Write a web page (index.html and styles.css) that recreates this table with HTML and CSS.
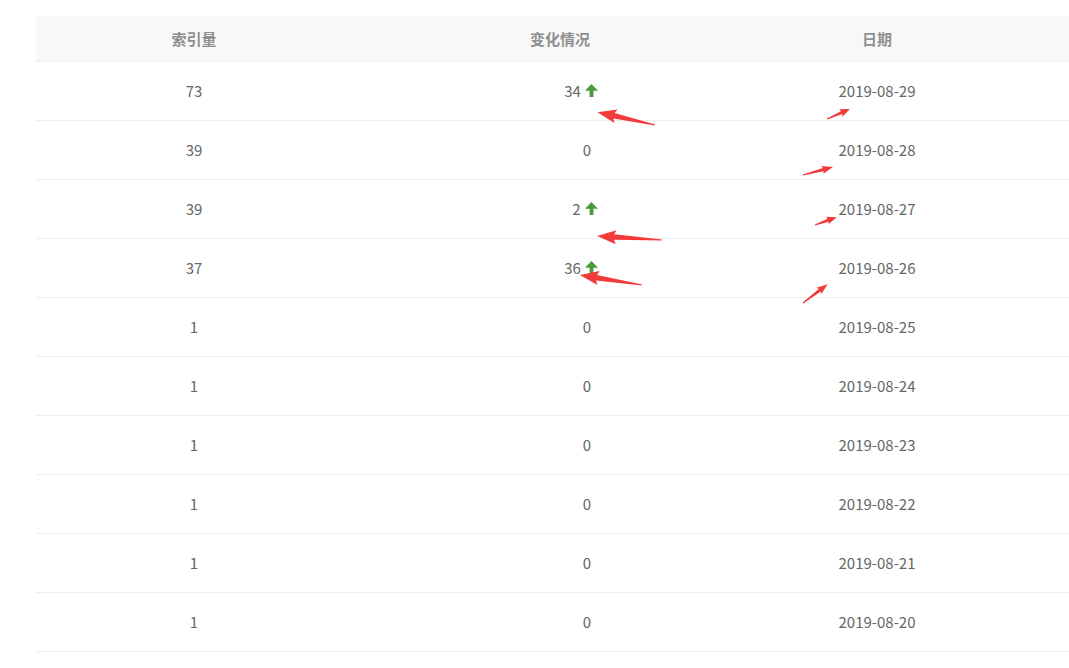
FILE: index.html
```html
<!DOCTYPE html>
<html lang="zh-CN">
<head>
<meta charset="utf-8">
<title>索引量</title>
<link rel="stylesheet" href="styles.css">
</head>
<body>
<div class="page">
  <div class="table">
    <div class="row head">
      <div class="cell">索引量</div>
      <div class="cell">变化情况</div>
      <div class="cell">日期</div>
      <div class="cell"></div>
    </div>
    <div class="row"><div class="cell">73</div><div class="cell chg rise">34<svg class="up" viewBox="0 0 13 13"><path d="M6.5 0 L13 6.8 H8.4 V13 H4.6 V6.8 H0 Z"/></svg></div><div class="cell">2019-08-29</div><div class="cell"></div></div>
    <div class="row"><div class="cell">39</div><div class="cell chg">0</div><div class="cell">2019-08-28</div><div class="cell"></div></div>
    <div class="row"><div class="cell">39</div><div class="cell chg rise one">2<svg class="up" viewBox="0 0 13 13"><path d="M6.5 0 L13 6.8 H8.4 V13 H4.6 V6.8 H0 Z"/></svg></div><div class="cell">2019-08-27</div><div class="cell"></div></div>
    <div class="row"><div class="cell">37</div><div class="cell chg rise">36<svg class="up" viewBox="0 0 13 13"><path d="M6.5 0 L13 6.8 H8.4 V13 H4.6 V6.8 H0 Z"/></svg></div><div class="cell">2019-08-26</div><div class="cell"></div></div>
    <div class="row"><div class="cell">1</div><div class="cell chg">0</div><div class="cell">2019-08-25</div><div class="cell"></div></div>
    <div class="row"><div class="cell">1</div><div class="cell chg">0</div><div class="cell">2019-08-24</div><div class="cell"></div></div>
    <div class="row"><div class="cell">1</div><div class="cell chg">0</div><div class="cell">2019-08-23</div><div class="cell"></div></div>
    <div class="row"><div class="cell">1</div><div class="cell chg">0</div><div class="cell">2019-08-22</div><div class="cell"></div></div>
    <div class="row"><div class="cell">1</div><div class="cell chg">0</div><div class="cell">2019-08-21</div><div class="cell"></div></div>
    <div class="row"><div class="cell">1</div><div class="cell chg">0</div><div class="cell">2019-08-20</div><div class="cell"></div></div>
  </div>
  <svg class="marks" width="1069" height="668" viewBox="0 0 1069 668">
    <g fill="#f23a3a">
      <polygon transform="translate(655,125) rotate(192.6)" points="0,-0.6 42,-2.8 40,-7 59,0 40,7 42,2.8 0,0.6"/>
      <polygon transform="translate(662,240) rotate(183.5)" points="0,-0.6 48,-2.8 46,-7 65,0 46,7 48,2.8 0,0.6"/>
      <polygon transform="translate(642,285) rotate(189.2)" points="0,-0.6 46,-2.8 44,-7 63,0 44,7 46,2.8 0,0.6"/>
      <polygon transform="translate(827,119) rotate(-23.5)" points="0,-0.5 16,-1.6 15,-4 25,0 15,4 16,1.6 0,0.5"/>
      <polygon transform="translate(803,175) rotate(-14.9)" points="0,-0.5 21,-1.6 20,-4 31,0 20,4 21,1.6 0,0.5"/>
      <polygon transform="translate(815,225) rotate(-20)" points="0,-0.5 14,-1.6 13,-4 23,0 13,4 14,1.6 0,0.5"/>
      <polygon transform="translate(803,303) rotate(-37.2)" points="0,-0.5 21,-1.6 20,-4 31,0 20,4 21,1.6 0,0.5"/>
    </g>
  </svg>
</div>
</body>
</html>
```
FILE: styles.css
```css
html, body {
  margin: 0;
  padding: 0;
  background: #fff;
}
.page {
  position: relative;
  width: 1069px;
  height: 668px;
  overflow: hidden;
  padding: 16px 0 0 36px;
  box-sizing: border-box;
  font-family: "Noto Sans CJK SC", "Noto Sans", sans-serif;
  font-size: 15px;
  color: #666;
}
.table {
  width: 1033px;
}
.row {
  display: grid;
  grid-template-columns: 316px 416px 218px 1fr;
  height: 58px;
  border-bottom: 1px solid #eee;
  align-items: center;
}
.row.head {
  height: 45px;
  background: #f8f8f8;
  color: #8f8f8f;
  font-weight: bold;
}
.cell {
  display: flex;
  justify-content: center;
  align-items: center;
  line-height: 20px;
}
.chg {
  padding-left: 54px;
}
.chg.rise {
  padding-left: 42px;
}
.chg.rise.one {
  padding-left: 50px;
}
.up {
  width: 13px;
  height: 13px;
  margin-left: 4px;
  margin-top: -2px;
  fill: #4a9a3c;
}
.marks {
  position: absolute;
  left: 0;
  top: 0;
  pointer-events: none;
}
```
